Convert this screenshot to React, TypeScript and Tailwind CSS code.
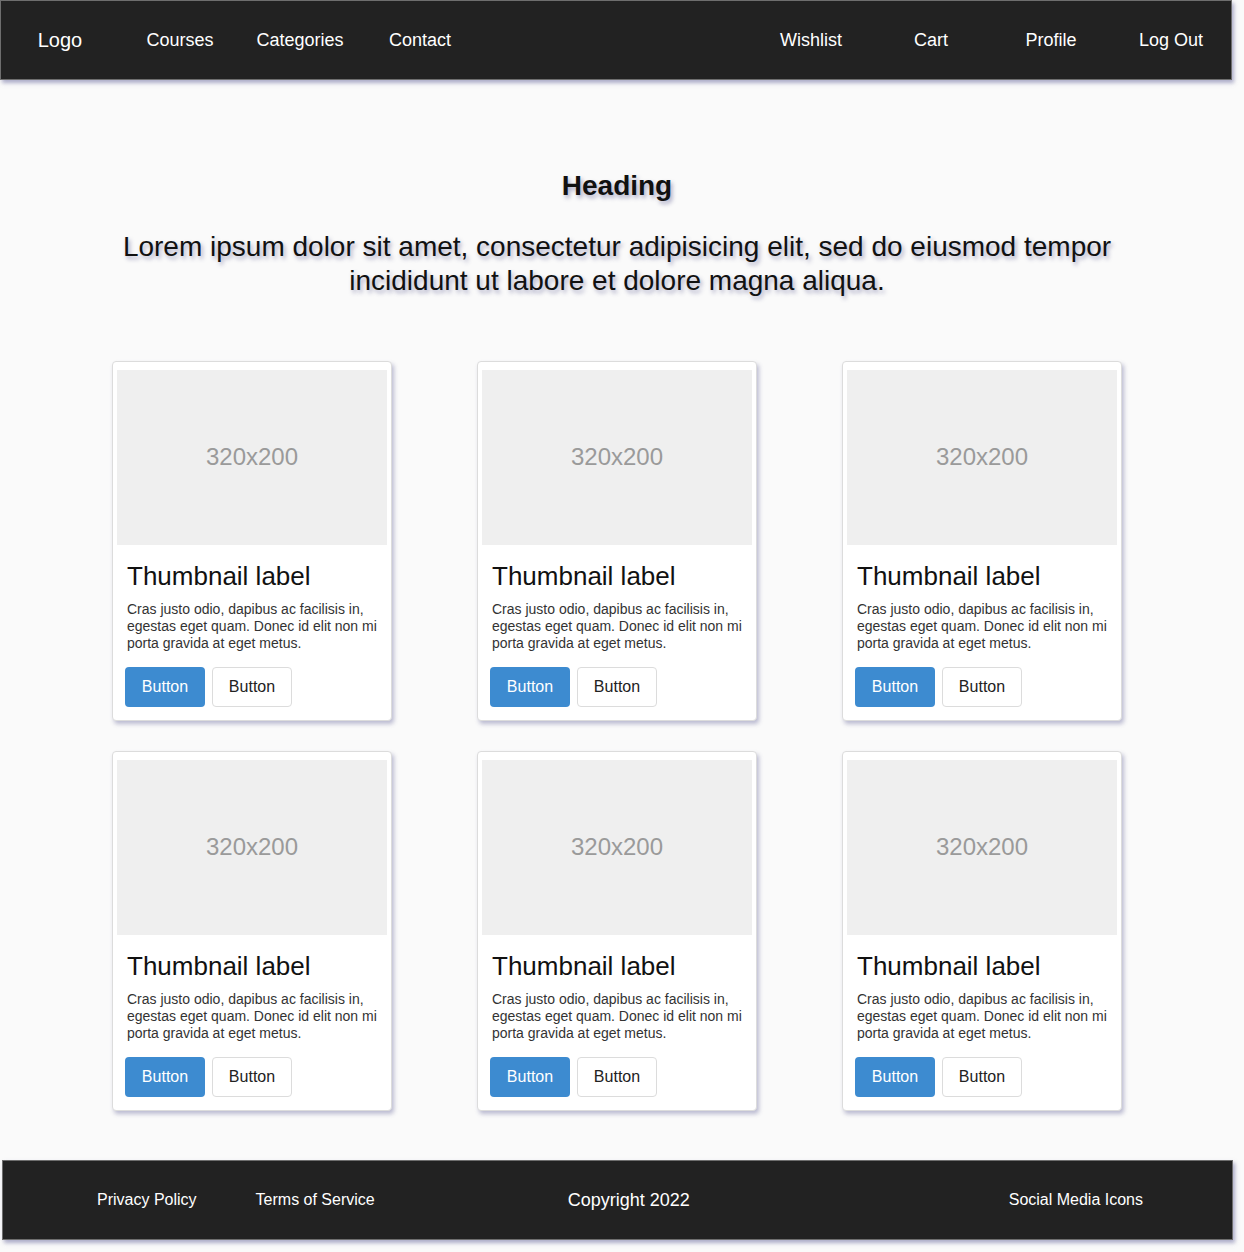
import React from 'react';

const navLeft = ['Courses', 'Categories', 'Contact'];
const navRight = ['Wishlist', 'Cart', 'Profile', 'Log Out'];

const font = "font-['Liberation_Sans',Arial,sans-serif]";

function NavItem({ label, big }: { label: string; big?: boolean }) {
  return (
    <a className={`w-[120px] text-center text-white ${big ? 'text-[20px]' : 'text-[18px]'} leading-[24px]`}>
      {label}
    </a>
  );
}

function Card() {
  return (
    <div className="w-[280px] h-[360px] bg-white border border-[#dcdcdc] rounded-[4px] px-1 pt-[8px] shadow-[2px_3px_4px_rgba(110,110,160,0.45)]">
      <div className="h-[175px] bg-[#efefef] flex items-center justify-center pb-[2px] text-[24px] text-[#9a9a9a]">
        320x200
      </div>
      <div className="px-[8px] pt-[16px]">
        <h3 className="pl-[2px] text-[26px] leading-[30px] text-[#111]">Thumbnail label</h3>
        <p className="pl-[2px] mt-[10px] text-[14px] leading-[17px] text-[#333]">
          Cras justo odio, dapibus ac facilisis in, egestas eget quam. Donec id elit non mi porta gravida at eget metus.
        </p>
        <div className="mt-[15px] flex gap-[7px]">
          <button className="w-[80px] h-[40px] rounded-[4px] bg-[#3d8bd0] text-white text-[16px]">Button</button>
          <button className="w-[80px] h-[40px] rounded-[4px] border border-[#dcdcdc] bg-white text-[#222] text-[16px]">
            Button
          </button>
        </div>
      </div>
    </div>
  );
}

export default function App() {
  return (
    <div className={`${font} bg-[#fafafa] min-h-[1252px] w-[1244px]`}>
      <div className="w-[1234px]">
        {/* Navbar */}
        <nav className="h-[80px] w-[1232px] bg-[#222] border border-[#6e6e6e] flex items-center justify-between shadow-[2px_3px_4px_rgba(110,110,160,0.55)]">
          <div className="flex -ml-[1px]">
            <NavItem label="Logo" big />
            {navLeft.map(l => (
              <NavItem key={l} label={l} />
            ))}
          </div>
          <div className="flex">
            {navRight.map(l => (
              <NavItem key={l} label={l} />
            ))}
          </div>
        </nav>

        {/* Hero */}
        <div className="pt-[90px] px-[110px] text-center [text-shadow:2px_3px_4px_rgba(70,70,130,0.45)]">
          <h1 className="text-[28px] leading-[32px] font-bold text-[#111]">Heading</h1>
          <p className="mt-[28px] text-[28px] leading-[34px] text-[#111]">
            Lorem ipsum dolor sit amet, consectetur adipisicing elit, sed do eiusmod tempor incididunt ut labore et dolore magna aliqua.
          </p>
        </div>

        {/* Cards */}
        <div className="mt-[63px] grid grid-cols-[repeat(3,280px)] gap-x-[85px] gap-y-[30px] justify-center">
          {Array.from({ length: 6 }).map((_, i) => (
            <Card key={i} />
          ))}
        </div>

        {/* Footer */}
        <footer className="mt-[49px] ml-[2px] h-[80px] w-[1231px] bg-[#222] border border-[#6e6e6e] flex items-center text-white shadow-[2px_3px_4px_rgba(110,110,160,0.55)]">
          <a className="ml-[94px] text-[16px]">Privacy Policy</a>
          <a className="ml-[59px] text-[16px]">Terms of Service</a>
          <span className="ml-[193px] text-[18px]">Copyright 2022</span>
          <a className="ml-auto mr-[89px] text-[16px]">Social Media Icons</a>
        </footer>
      </div>
    </div>
  );
}
